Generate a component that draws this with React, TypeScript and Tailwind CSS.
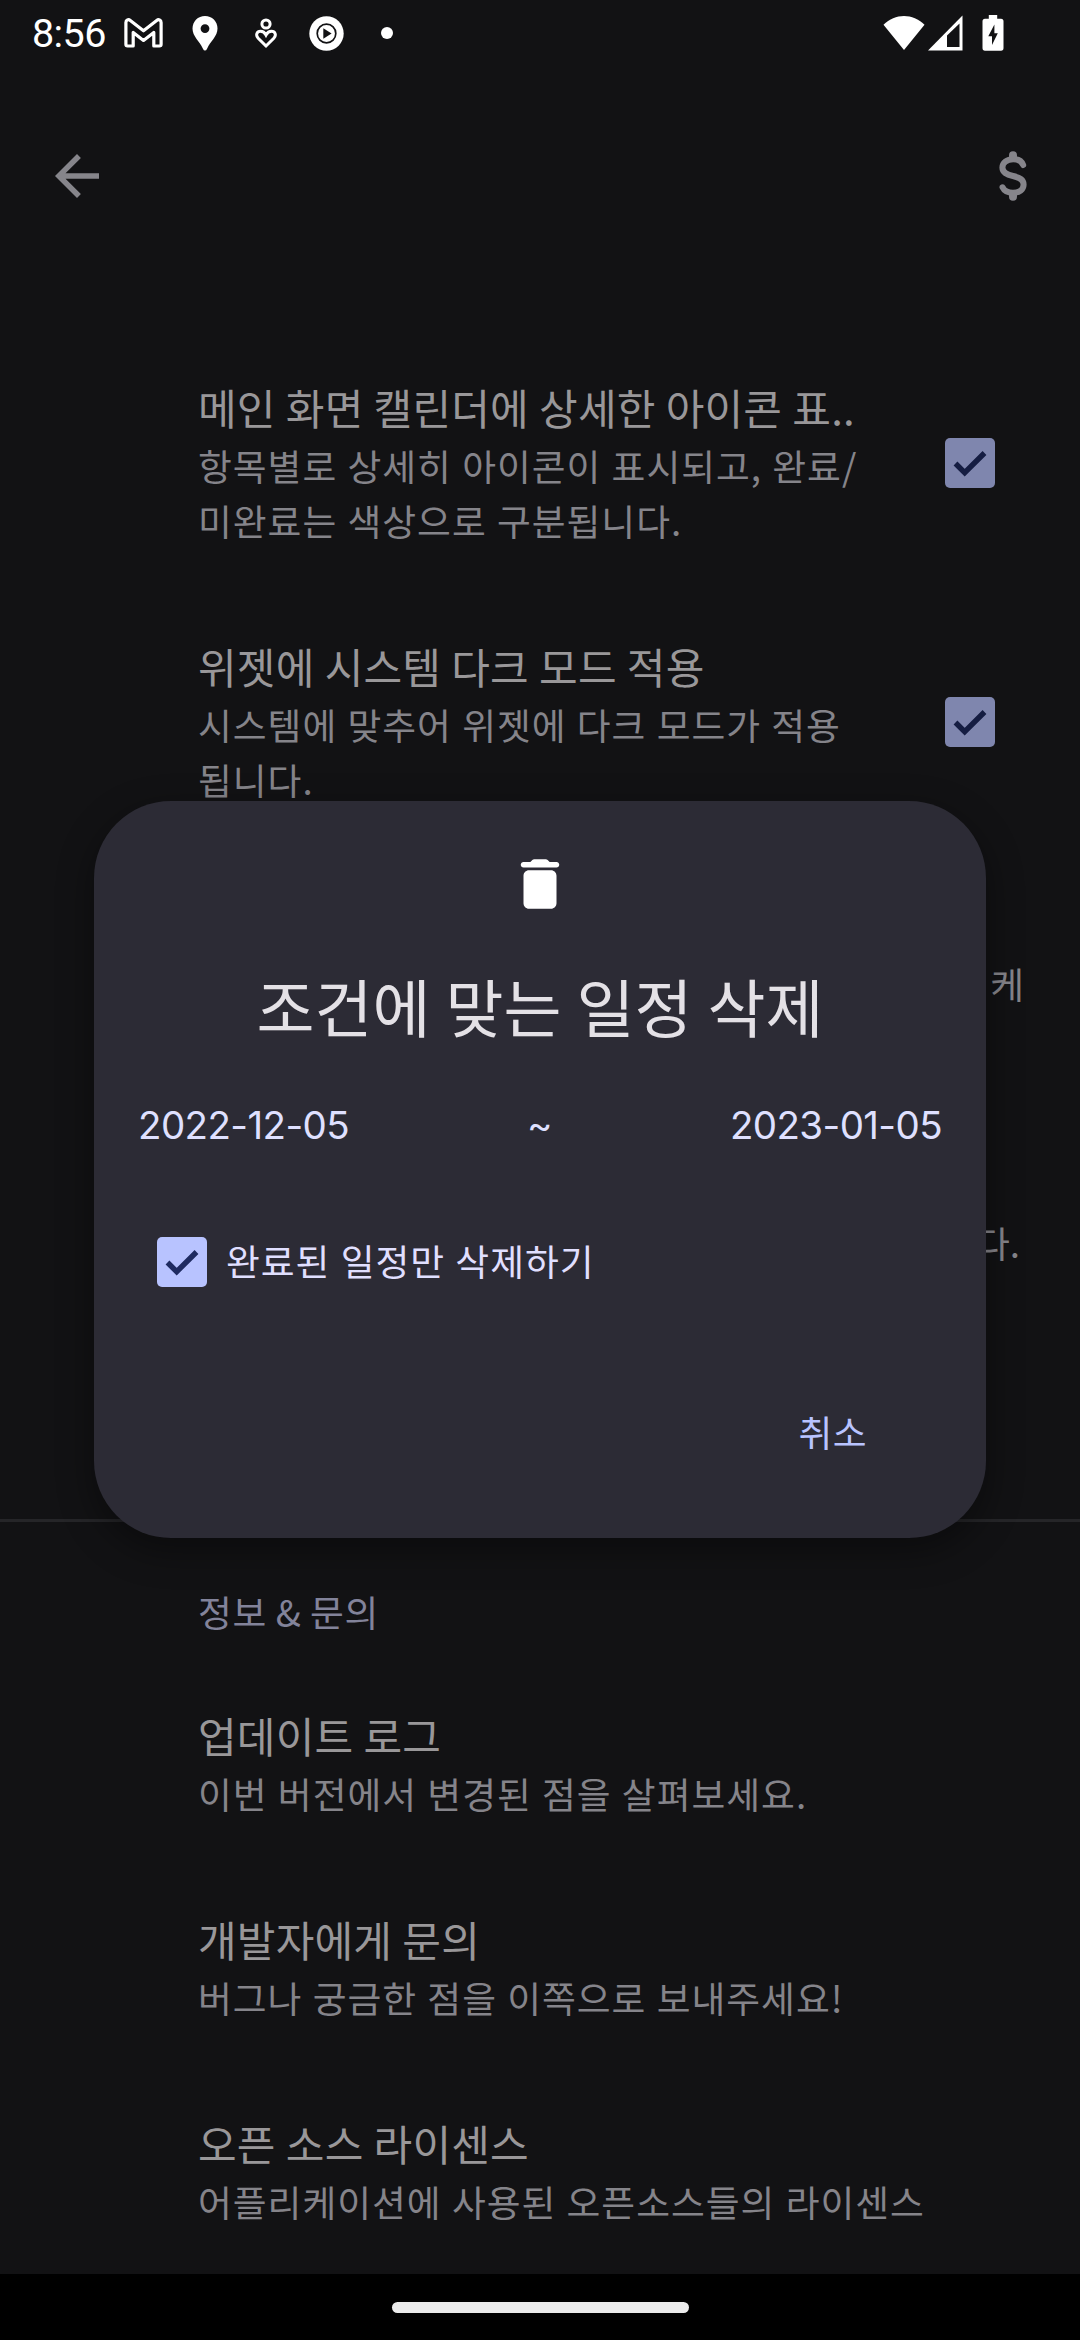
type Setting = {
  title?: string;
  lines: string[];
  checked?: boolean;
};

const displaySettings: Setting[] = [
  {
    title: "메인 화면 캘린더에 상세한 아이콘 표..",
    lines: ["항목별로 상세히 아이콘이 표시되고, 완료/", "미완료는 색상으로 구분됩니다."],
    checked: true,
  },
  {
    title: "위젯에 시스템 다크 모드 적용",
    lines: ["시스템에 맞추어 위젯에 다크 모드가 적용", "됩니다."],
    checked: true,
  },
];

const infoSettings: Setting[] = [
  { title: "업데이트 로그", lines: ["이번 버전에서 변경된 점을 살펴보세요."] },
  { title: "개발자에게 문의", lines: ["버그나 궁금한 점을 이쪽으로 보내주세요!"] },
  { title: "오픈 소스 라이센스", lines: ["어플리케이션에 사용된 오픈소스들의 라이센스"] },
];

function Checkbox({ dimmed }: { dimmed?: boolean }) {
  return (
    <div
      className={
        dimmed
          ? "size-[50px] shrink-0 rounded-[5px] bg-[#7f86ae] text-[#151d42]"
          : "size-[50px] shrink-0 rounded-[5px] bg-[#b8c3ff] text-[#1f2b61]"
      }
    >
      <svg viewBox="0 0 50 50" fill="none" stroke="currentColor" strokeWidth="5.4">
        <path d="M10.5 25.5 L19.7 34.7 L39.5 15" />
      </svg>
    </div>
  );
}

function StatusBar() {
  return (
    <div className="flex h-[66px] items-center pl-[32px] pr-[76px] text-white">
      <span className="w-[92px] pt-[2px] font-[Roboto,sans-serif] text-[39.5px] leading-[66px] tracking-[-0.6px]">
        8:56
      </span>

      <svg className="h-[30px] w-[39px]" viewBox="0 0 39 30" fill="none" stroke="currentColor" strokeWidth="3.2" strokeLinejoin="round">
        <path d="M1.9 26.3V4.4C1.9 2 4.4 .9 6.3 2.4L19.5 12.8L32.7 2.4C34.6 .9 37.1 2 37.1 4.4V26.3Q37.1 28 35.4 28H29.8V14.4L19.5 22.4L9.2 14.4V28H3.6Q1.9 28 1.9 26.3Z" />
      </svg>

      <svg className="ml-[29px] h-[35px] w-[26px]" viewBox="0 0 26 35" fill="currentColor">
        <path
          fillRule="evenodd"
          d="M13 0C6 0 .5 5.5 .5 12.4C.5 20.2 7.5 25 10.8 32.4Q11.8 34.6 13 34.6T15.2 32.4C18.5 25 25.5 20.2 25.5 12.4C25.5 5.5 20 0 13 0ZM13 8.2A4.4 4.4 0 1 1 13 17A4.4 4.4 0 1 1 13 8.2Z"
        />
      </svg>

      <svg className="ml-[37px] h-[31px] w-[22px]" viewBox="0 0 22 31" fill="none" stroke="currentColor" strokeWidth="3">
        <circle cx="11" cy="6" r="4.1" />
        <path d="M11 28L3.2 20.2C.2 17 2 13.3 5.5 13.3C8 13.3 9.8 14.8 11 17C12.2 14.8 14 13.3 16.5 13.3C20 13.3 21.8 17 18.8 20.2Z" />
      </svg>

      <svg className="ml-[32px] size-[35px]" viewBox="0 0 35 35">
        <circle cx="17.5" cy="17.5" r="17.2" fill="#fff" />
        <circle cx="17.5" cy="17.5" r="9.3" fill="none" stroke="#121214" strokeWidth="1.7" />
        <path d="M14.3 12.3V22.7L22.6 17.5Z" fill="#121214" />
      </svg>

      <div className="ml-[37px] size-3 rounded-full bg-white" />

      <svg className="ml-auto h-[36px] w-[42px]" viewBox="0 0 42 36" fill="currentColor">
        <path d="M.5 9.8C12 -2 30 -2 41.5 9.8L21 35Z" />
      </svg>

      <svg className="ml-[3px] h-[36px] w-[35px]" viewBox="0 0 35 36">
        <path d="M0 35.5L34.5 .5V35.5Z" fill="#fff" />
        <path d="M19 20.5L31.5 8.5V32H19Z" fill="#121214" />
      </svg>

      <svg className="ml-[19px] h-[36px] w-[22px]" viewBox="0 0 22 36">
        <path
          d="M6.8 0H15.2V3.7H19Q21.5 3.7 21.5 6.2V33Q21.5 35.7 19 35.7H3Q.5 35.7 .5 33V6.2Q.5 3.7 3 3.7H6.8Z"
          fill="#fff"
        />
        <path d="M12.4 9.5L6.3 21.2H10V30L15.8 18.3H12.4Z" fill="#121214" />
      </svg>
    </div>
  );
}

function Toolbar() {
  return (
    <div className="flex items-start justify-between pl-11 pr-[34px] pt-[77px] text-[#86858b]">
      <svg className="size-[66px]" viewBox="0 0 24 24" fill="currentColor">
        <path d="M20 11H7.83l5.59-5.59L12 4l-8 8 8 8 1.41-1.41L7.83 13H20v-2z" />
      </svg>

      <svg className="size-[66px]" viewBox="0 0 24 24" fill="none" stroke="currentColor" strokeLinecap="round">
        <path
          strokeWidth="2.2"
          d="M15.7 8C15.2 6.7 13.9 5.9 12.1 5.9C9.7 5.9 8.15 7.2 8.15 8.9C8.15 10.7 9.6 11.4 12 12C14.4 12.6 15.85 13.3 15.85 15.1C15.85 16.9 14.3 18.1 12 18.1C10.2 18.1 8.8 17.4 8.2 16.1"
        />
        <path strokeWidth="2.9" d="M12 4.45V5.2M12 18.8V19.55" />
      </svg>
    </div>
  );
}

function SettingRow({ title, lines, checked }: Setting) {
  return (
    <div className="flex items-center justify-between pt-[44px] pb-[44px] pl-[198px] pr-[85px]">
      <div className="whitespace-nowrap">
        <div className="mb-px text-[42px] leading-[60px] tracking-[0.2px] text-[#999799] [word-spacing:0.5px]">
          {title}
        </div>

        {lines.map((line) => (
          <div
            key={line}
            className="text-[36.75px] leading-[55px] tracking-[1px] text-[#85848a] [word-spacing:1px]"
          >
            {line}
          </div>
        ))}
      </div>

      {checked && <Checkbox dimmed />}
    </div>
  );
}

function DeleteDialog() {
  return (
    <div className="absolute inset-0 flex items-center justify-center pb-px">
      <div className="flex h-[737px] w-[892px] flex-col rounded-[77px] bg-[#2c2b35] shadow-[0_12px_36px_rgba(0,0,0,0.4)]">
        <svg className="mx-auto mt-[50px] size-[66px] shrink-0" viewBox="0 0 24 24" fill="#fff">
          <path d="M6 19c0 1.1.9 2 2 2h8c1.1 0 2-.9 2-2V9c0-1.1-.9-2-2-2H8c-1.1 0-2 .9-2 2v10zM18 4h-2.5l-.71-.71c-.18-.18-.44-.29-.7-.29H9.91c-.26 0-.52.11-.7.29L8.5 4H6c-.55 0-1 .45-1 1s.45 1 1 1h12c.55 0 1-.45 1-1s-.45-1-1-1z" />
        </svg>

        <h2 className="mt-[42px] text-center text-[63px] leading-[92px] text-[#e4e1e6] [word-spacing:1px]">
          조건에 맞는 일정 삭제
        </h2>

        <div className="mt-[44px] flex items-center justify-between px-[44px] font-[Inter,sans-serif] text-[38.5px] leading-[60px] tracking-[-0.6px] text-[#dfe0ff]">
          <span>2022-12-05</span>
          <span>~</span>
          <span>2023-01-05</span>
        </div>

        <div className="mt-[80px] flex items-center gap-[19px] pl-[63px]">
          <Checkbox />
          <span className="-mt-[2px] text-[36.75px] leading-[55px] tracking-[1px] text-[#e0dfff] [word-spacing:1px]">
            완료된 일정만 삭제하기
          </span>
        </div>

        <button className="ml-auto mr-[119px] mt-[116px] text-[36.75px] leading-[55px] tracking-[0.5px] text-[#b8c3ff]">
          취소
        </button>
      </div>
    </div>
  );
}

export default function App() {
  return (
    <div className="relative flex h-[2340px] w-[1080px] flex-col overflow-hidden bg-[#121214] font-['Noto_Sans_CJK_KR',sans-serif]">
      <StatusBar />
      <div className="h-[267px]">
        <Toolbar />
      </div>

      {displaySettings.map((item) => (
        <SettingRow key={item.title} {...item} />
      ))}

      {/* rows mostly covered by the dialog */}
      <div className="h-[259px] pr-[56px] pt-[105px] text-right text-[36.75px] leading-[55px] text-[#85848a]">
        케
      </div>
      <div className="h-[259px] pr-[60px] pt-[105px] text-right text-[36.75px] leading-[55px] text-[#85848a]">
        다.
      </div>

      <div className="mt-[150px] h-[3px] shrink-0 bg-[#252528]" />

      <div className="h-[139px] pl-[198px] pt-[62px] text-[36.75px] leading-[55px] tracking-[0.6px] text-[#82839a]">
        정보 &amp; 문의
      </div>

      {infoSettings.map((item) => (
        <SettingRow key={item.title} {...item} />
      ))}

      <div className="mt-auto flex h-[66px] shrink-0 items-center justify-center bg-black">
        <div className="h-[11px] w-[297px] rounded-full bg-[#ececec]" />
      </div>

      <DeleteDialog />
    </div>
  );
}
